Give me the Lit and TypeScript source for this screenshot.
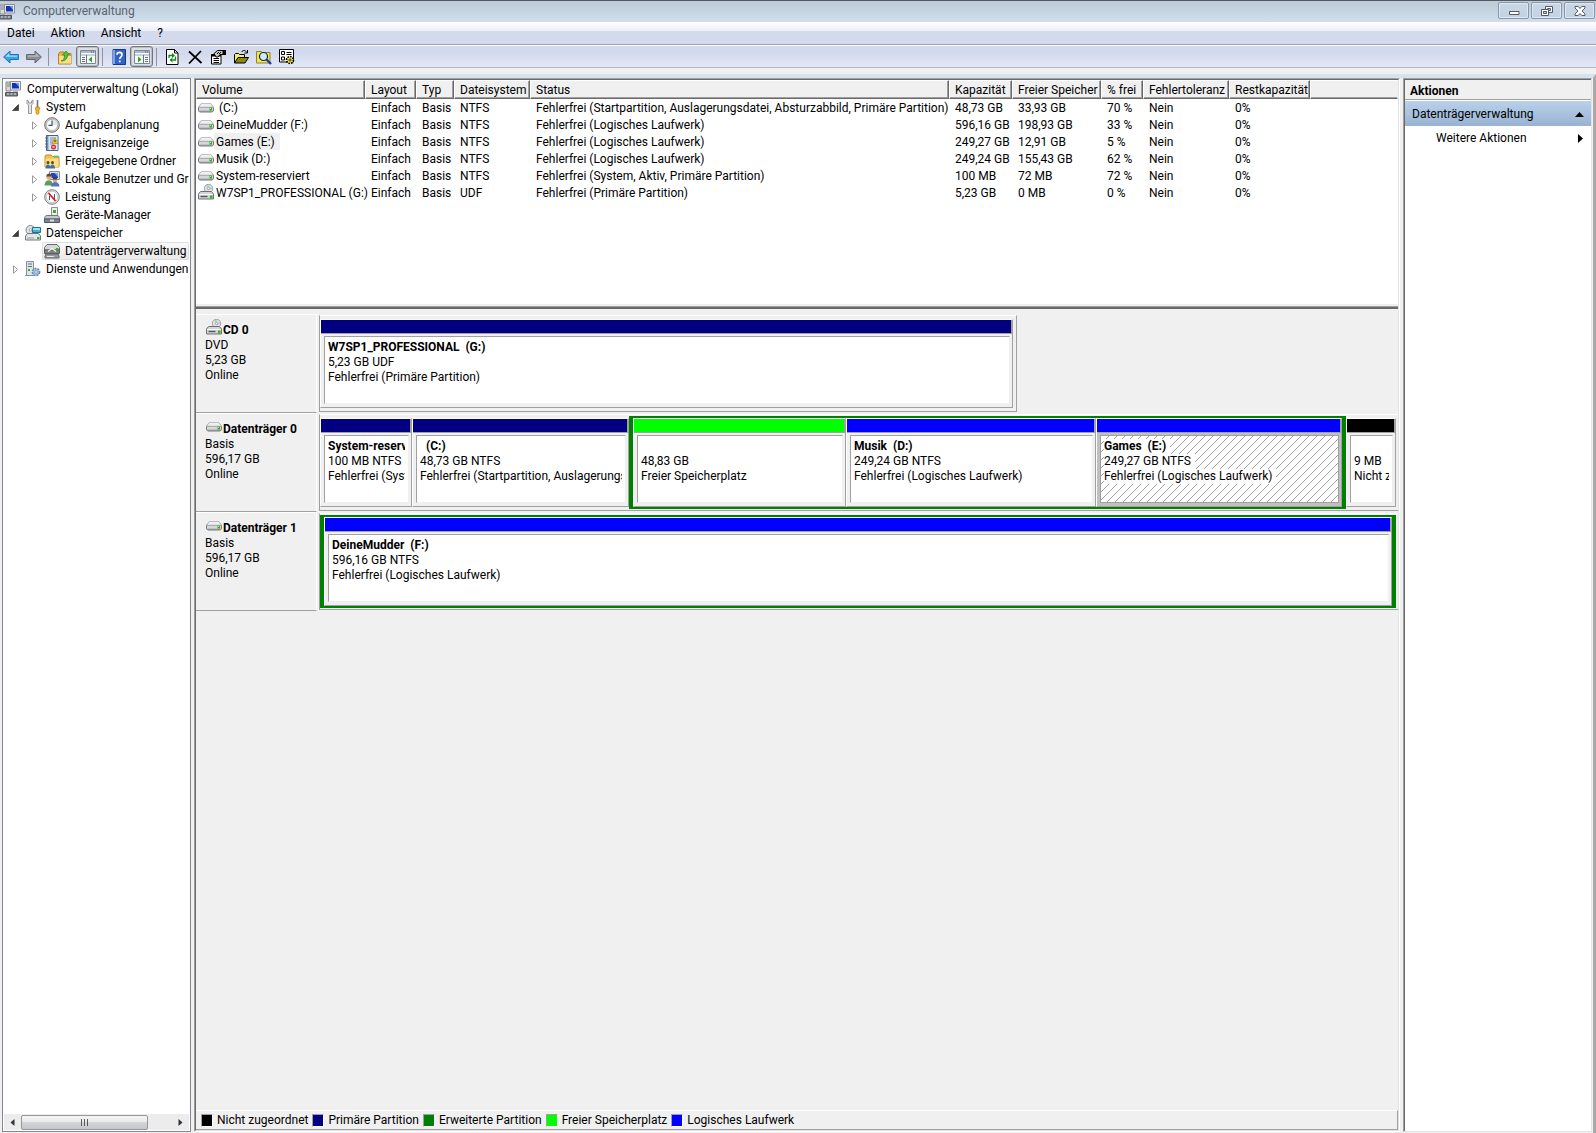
import { LitElement, html, svg, css, nothing } from "lit";
import { customElement, state } from "lit/decorators.js";
import { classMap } from "lit/directives/class-map.js";
import { styleMap } from "lit/directives/style-map.js";

const drive = svg`
  <path d="M3 5.500h10l2.500 3v3.200l-1.200 1.300H1.700L.5 11.700v-3.200z" fill="#a9abae" stroke="#77797c"/>
  <path d="M3.200 4.500h9.600l2.700 3.700H.5z" fill="#eeeff1" stroke="#9a9c9f" stroke-width=".6"/>
  <path d="M1 9h14v2.500H1z" fill="#d5d7da"/>
  <path d="M11.500 8.500h2.500v3h-2.500z" fill="#2fae1e"/><path d="M12 9h1v1h-1z" fill="#b8f29c"/>`;

const optical = svg`
  <circle cx="10.500" cy="4.500" r="4.200" fill="#dfe3e6" stroke="#8b9095" stroke-width=".8"/>
  <path d="M10.500 4.500L8 1.300A4 4 0 0 1 11 .8z" fill="#9fd6c0"/>
  <path d="M10.500 4.500l3.800-1.600a4 4 0 0 1 .2 2.400z" fill="#c8b6e2"/>
  <circle cx="10.500" cy="4.500" r="1.200" fill="#fff" stroke="#777" stroke-width=".6"/>
  <path d="M2.500 7.500h11l2 2.500v5H.5v-5z" fill="#d2d4d7" stroke="#6f7275"/>
  <path d="M1 10.500h14" stroke="#fafafa"/><path d="M2.500 12.500h7" stroke="#54575a" stroke-width="1.400"/>
  <path d="M12 11.500h2.500v3H12z" fill="#36b324"/>`;

const computer = svg`
  <path d="M1 1h5v9H1z" fill="#d8dadd" stroke="#85888c"/><path d="M2 3h3M2 5h3" stroke="#7c8084"/>
  <path d="M5.500.5h10v8.500h-10z" fill="#e8e9eb" stroke="#8b8e92"/>
  <path d="M7 2h7v5.500H7z" fill="#1233b8"/><path d="M10.500 2H14v4z" fill="#6d9bf2"/>
  <path d="M8 9.500h5v2H8z" fill="#b9bbbf"/>
  <path d="M.5 11.500h12v3.500H.5z" fill="#73797f" stroke="#53585d"/>
  <path d="M2 13h2M5.500 13h2M9 13h2" stroke="#e8eaec"/>`;

const paneWindow = (d: unknown) => svg`
  <path d="M.5 1.500h15v13H.5z" fill="#fbfcfd" stroke="#7d8897"/>
  <path d="M1 2h14v2H1z" fill="#a9b9cd"/><path d="M11 3h1M13 3h1" stroke="#45556a"/>
  <path d="M1 6h14" stroke="#98a4b3"/>${d}`;

const icons: Record<string, unknown> = {
  drive,
  optical,
  computer,
  tools: svg`
    <path d="M2 1v3.500l1.500 1.500V14.500h3V6L8 4.500V1L6.500 2v2h-3V2z" fill="#e4e6e8" stroke="#7d8185" stroke-width=".8"/>
    <path d="M12.500 1v7" stroke="#6f7376" stroke-width="1.600"/><path d="M10.800 8h3.400l.5 2-.7 1v3.500l-1.500 1-1.500-1V11l-.7-1z" fill="#f5b417" stroke="#b9800a" stroke-width=".7"/>`,
  clock: svg`
    <circle cx="8" cy="8" r="7.300" fill="#cfcac2" stroke="#77736c"/><circle cx="8" cy="8" r="5.600" fill="#fbfcfe" stroke="#a19c92" stroke-width=".6"/>
    <path d="M8 2.400A5.600 5.600 0 0 1 13.600 8H8z" fill="#d9e7f6"/><path d="M8 3.500V8.300H4.500" fill="none" stroke="#3b5578" stroke-width="1.200"/>`,
  events: svg`
    <path d="M2.500.5h11.500v15H2.500z" fill="#7fa0cf" stroke="#43618f"/><path d="M4.500 1h9v14h-9z" fill="#dde7f4"/>
    <path d="M6 3h6M6 5h4M6 7h3M6 9h2" stroke="#6f8fbe"/><path d="M1 3h3M1 6h3M1 9h3M1 12h3" stroke="#5d6b80"/>
    <path d="M11 3l3 5.500H8z" fill="#ffd52e" stroke="#b08b00" stroke-width=".7"/><path d="M11 5v2.300" stroke="#222"/>
    <circle cx="9.500" cy="12" r="2.500" fill="#d8262c"/><path d="M8.500 11l2 2m0-2l-2 2" stroke="#fff" stroke-width=".8"/>`,
  share: svg`
    <path d="M1 3.500L2 2h5l1.500 1.500H15V14H1z" fill="#f3c34f" stroke="#c08d21"/><path d="M1.500 5.500h13V14h-13z" fill="#fbdd87"/>
    <path d="M10 2.500h4.500v2.500H10z" fill="#7fbf6a"/>
    <circle cx="4" cy="9.500" r="1.500" fill="#5b4630"/><circle cx="8.500" cy="9.500" r="1.500" fill="#5b4630"/>
    <path d="M1.500 15.500c0-5.500 5-5.500 5 0zM6 15.500c0-5.500 5-5.500 5 0z" fill="#3f719f"/>`,
  users: svg`
    <path d="M5.500.5h10v8h-10z" fill="#dcdfe4" stroke="#878b91"/><path d="M7 2h7v5H7z" fill="#1e46c4"/><path d="M10.500 2H14v4z" fill="#7aa3f3"/>
    <circle cx="5" cy="6" r="2.700" fill="#e0b187"/><path d="M2.300 5.500c0-4 5.500-4 5.500 0z" fill="#6b4a2b"/>
    <path d="M.5 14.500c0-7 8.500-7 8.500 0z" fill="#5f9a63"/><circle cx="11" cy="9" r="2.300" fill="#d9a679"/><path d="M8.700 8.500c0-3 4.600-3 4.600 0z" fill="#433"/>
    <path d="M7 15.500c0-6 8.500-6 8.500 0z" fill="#4e79b4"/>`,
  perf: svg`
    <circle cx="8" cy="8" r="7.300" fill="#e6e7e8" stroke="#7b7d80"/><circle cx="8" cy="8" r="5.700" fill="#fff" stroke="#a5a7a9" stroke-width=".6"/>
    <path d="M5.500 11V6.500M10.500 5v5.500" stroke="#555" stroke-width="1"/><path d="M4.500 4l7 8" stroke="#dc1f26" stroke-width="1.800"/>`,
  device: svg`
    <path d="M7.500.5h6V9h-6z" fill="#eceef0" stroke="#8c9094"/><path d="M9 3h3v3H9z" fill="#36b324"/>
    <path d="M2 8.500h12l1.500 2v1.500H.5v-1.500z" fill="#c5c9cd" stroke="#75797d"/><path d="M.5 12h15v3.500H.5z" fill="#7c868f" stroke="#525a62"/>
    <path d="M6 12.500h4v2H6z" fill="#d8dde2"/>`,
  storage: svg`
    <circle cx="5.500" cy="5" r="4.500" fill="#dfe3e6" stroke="#84898e"/><circle cx="5.500" cy="5" r="1.300" fill="#fff" stroke="#777" stroke-width=".6"/>
    <path d="M7.500 2.500h8v5h-8z" fill="#3db2dd" stroke="#26718f"/><path d="M8 3h7v2H8z" fill="#9de1f5"/>
    <path d="M2.500 8.500h11l2 2.500v4H.5v-4z" fill="#e4e6e8" stroke="#707477"/><path d="M12 12h2.500v2H12z" fill="#36b324"/><path d="M2 13h7" stroke="#999"/>`,
  disks: svg`
    <path d="M3 1.500h10l2.500 3V7H.5V4.500z" fill="#d5d7d9" stroke="#666a6d"/><path d="M.5 7h15v3.500H.5z" fill="#7d8184" stroke="#5a5e61"/>
    <path d="M4 8.500l4-3 4 3" fill="none" stroke="#f3f4f4" stroke-width="1.300"/><path d="M12 5h2.500v2.500H12z" fill="#36b324"/>
    <path d="M2 11h12l1 2v2H1v-2z" fill="#94989b" stroke="#606467"/><path d="M3 13.500h7" stroke="#e6e7e8"/>`,
  services: svg`
    <path d="M1.500.5h7v14h-7z" fill="#dfe3e8" stroke="#8490a0"/><path d="M3 3h4M3 5.500h4" stroke="#5f6f84"/><path d="M3 8h2v2H3z" fill="#36b324"/>
    <path d="M0 14.500h7" stroke="#8490a0"/>
    <circle cx="11" cy="11" r="3.600" fill="#a9c3de" stroke="#6a8bb0" stroke-width="1.600" stroke-dasharray="2 1"/><circle cx="11" cy="11" r="1.300" fill="#fff" stroke="#6a8bb0" stroke-width=".7"/>`,
  back: svg`<path d="M.6 8L7 2v3.500h8.400v5H7V14z" fill="#3aa5e4" stroke="#1d6fae"/><path d="M2.500 7.700L6.300 4v2.500h8v1.200z" fill="#a3dcf8"/>`,
  forward: svg`<path d="M15.400 8L9 2v3.500H.6v5H9V14z" fill="#8b8f93" stroke="#62666a"/><path d="M13.500 7.700L9.700 4v2.500h-8v1.200z" fill="#b9bcbf"/>`,
  up: svg`
    <path d="M1.500 4.500L3 3h4l1 1.500h6v10.500h-12.500z" fill="#eab64a" stroke="#b3821f"/><path d="M2 7h12v7.500H2z" fill="#fbdc8b"/>
    <path d="M4 12c3-.5 3.500-3 3.500-6H5.500l3.500-4 3.500 4h-2C10.500 9 9 12 4 12z" fill="#58c232" stroke="#2c8414" stroke-width=".7"/>`,
  treePane: paneWindow(svg`<path d="M6.500 6v8M2 8.500h3M2 10.500h3M2 12.500h3" stroke="#5e7391"/><path d="M12 7.500v6L8.500 10.500z" fill="#2fa51c"/>`),
  actionPane: paneWindow(svg`<path d="M9.500 6v8M11 8.500H14M11 10.500H14M11 12.500H14" stroke="#5e7391"/><path d="M4 7.500v6l3.500-3z" fill="#2fa51c"/>`),
  help: svg`<path d="M2 .5h12.500v15H2z" fill="#2f63c4" stroke="#18397f"/><path d="M2 1h2v14H2z" fill="#7fa4ea"/><path d="M6 5.800c0-3.300 5-3.300 5 0 0 2-2.300 2-2.300 4.200" fill="none" stroke="#fff" stroke-width="1.700"/><path d="M7.800 11.500h1.800v1.800H7.800z" fill="#fff"/>`,
  refresh: svg`<path d="M2.500.5h8l3.500 3.500v11.500H2.500z" fill="#fff" stroke="#000"/><path d="M10.500.5V4H14" fill="none" stroke="#000"/>
    <path d="M5 9V6.500h3M11.500 7.500v3.500H8.500" fill="none" stroke="#0a8a14" stroke-width="1.300"/><path d="M8 4v5l3-2.500zM8.500 8.500v5l-3-2.500z" fill="#0a8a14"/>`,
  remove: svg`<path d="M2 2.500L14.500 14M14 2L2 14.500" fill="none" stroke="#000" stroke-width="1.800"/>`,
  props: svg`<path d="M1.500 5.500h9.500v9.500H1.500z" fill="#fff" stroke="#000"/><path d="M1.500 6.500H11" stroke="#000" stroke-width="2"/><path d="M3.500 9.500h5.500M3.500 11.500h5.500M3.500 13.500h5.500" stroke="#000"/>
    <path d="M4 4.500L7.500 1.500H13v4h-3L8 8H6z" fill="#c9c9bb" stroke="#000"/><path d="M13 1h3v5h-3z" fill="#000"/><path d="M7 5l2-2M9 5l2-2" stroke="#000"/>`,
  open: svg`<path d="M1.500 14V5.500l1-1h3l1 1h5V8" fill="#f6ee6a" stroke="#000"/><path d="M1.500 14L5 8.500h10.500L12 14z" fill="#8d861a" stroke="#000"/><path d="M8.500 3c2-2.500 4-1.500 5.500.5M14.500 1v3h-3" fill="none" stroke="#000"/>`,
  find: svg`<path d="M.5 2.500h5l1 1h7.500v10.500H.5z" fill="#f2e35c" stroke="#8f8420"/><circle cx="7.500" cy="7.500" r="4" fill="#c9eefb" stroke="#222" stroke-width="1.200"/><path d="M10.500 10.500l4.500 4.500" stroke="#1336b5" stroke-width="2.300"/>`,
  settings: svg`<path d="M.5.500h14v12.500H.5z" fill="#fff" stroke="#000"/><path d="M2.500 2.500h3v3h-3zM2.500 8h3v3h-3z" fill="none" stroke="#000"/><path d="M7.500 3.500h5M7.500 5.500h5M7 9.500h1" stroke="#000"/>
    <circle cx="11" cy="11" r="3.400" fill="#f4e64a" stroke="#000" stroke-width="1.800" stroke-dasharray="1.600 1"/><circle cx="11" cy="11" r="2.400" fill="#f4e64a"/><circle cx="11" cy="11" r="1.100" fill="#fff" stroke="#000" stroke-width=".8"/>`,
};

const icon = (name: string) =>
  html`<svg class="icon" width="16" height="16" viewBox="0 0 16 16" aria-hidden="true">${icons[name]}</svg>`;

interface TreeItem { label: string; icon: string; depth: number; arrow?: "open" | "closed" }
const tree: TreeItem[] = [
  { label: "Computerverwaltung (Lokal)", icon: "computer", depth: 0 },
  { label: "System", icon: "tools", depth: 1, arrow: "open" },
  { label: "Aufgabenplanung", icon: "clock", depth: 2, arrow: "closed" },
  { label: "Ereignisanzeige", icon: "events", depth: 2, arrow: "closed" },
  { label: "Freigegebene Ordner", icon: "share", depth: 2, arrow: "closed" },
  { label: "Lokale Benutzer und Gruppen", icon: "users", depth: 2, arrow: "closed" },
  { label: "Leistung", icon: "perf", depth: 2, arrow: "closed" },
  { label: "Geräte-Manager", icon: "device", depth: 2 },
  { label: "Datenspeicher", icon: "storage", depth: 1, arrow: "open" },
  { label: "Datenträgerverwaltung", icon: "disks", depth: 2 },
  { label: "Dienste und Anwendungen", icon: "services", depth: 1, arrow: "closed" },
];

const columns: [string, number][] = [
  ["Volume", 169], ["Layout", 51], ["Typ", 38], ["Dateisystem", 76], ["Status", 419],
  ["Kapazität", 63], ["Freier Speicher", 89], ["% frei", 42], ["Fehlertoleranz", 86], ["Restkapazität", 81],
];

const volumes: string[][] = [
  ["\u00a0(C:)", "Einfach", "Basis", "NTFS", "Fehlerfrei (Startpartition, Auslagerungsdatei, Absturzabbild, Primäre Partition)", "48,73 GB", "33,93 GB", "70 %", "Nein", "0%"],
  ["DeineMudder (F:)", "Einfach", "Basis", "NTFS", "Fehlerfrei (Logisches Laufwerk)", "596,16 GB", "198,93 GB", "33 %", "Nein", "0%"],
  ["Games (E:)", "Einfach", "Basis", "NTFS", "Fehlerfrei (Logisches Laufwerk)", "249,27 GB", "12,91 GB", "5 %", "Nein", "0%"],
  ["Musik (D:)", "Einfach", "Basis", "NTFS", "Fehlerfrei (Logisches Laufwerk)", "249,24 GB", "155,43 GB", "62 %", "Nein", "0%"],
  ["System-reserviert", "Einfach", "Basis", "NTFS", "Fehlerfrei (System, Aktiv, Primäre Partition)", "100 MB", "72 MB", "72 %", "Nein", "0%"],
  ["W7SP1_PROFESSIONAL (G:)", "Einfach", "Basis", "UDF", "Fehlerfrei (Primäre Partition)", "5,23 GB", "0 MB", "0 %", "Nein", "0%"],
];

type Kind = "primary" | "logical" | "free" | "unallocated";
interface Partition { kind: Kind; share: number; name: string; size: string; status: string }
interface Extended { share: number; parts: Partition[] }
interface Disk { name: string; icon: string; lines: string[]; share: number; rest: number; parts: (Partition | Extended)[] }

const disks: Disk[] = [
  {
    name: "CD 0", icon: "optical", lines: ["DVD", "5,23 GB", "Online"], share: 698, rest: 381,
    parts: [{ kind: "primary", share: 1, name: "W7SP1_PROFESSIONAL  (G:)", size: "5,23 GB UDF", status: "Fehlerfrei (Primäre Partition)" }],
  },
  {
    name: "Datenträger 0", icon: "drive", lines: ["Basis", "596,17 GB", "Online"], share: 1, rest: 0,
    parts: [
      { kind: "primary", share: 92, name: "System-reserviert", size: "100 MB NTFS", status: "Fehlerfrei (System, Aktiv, Primäre Partition)" },
      { kind: "primary", share: 217, name: "  (C:)", size: "48,73 GB NTFS", status: "Fehlerfrei (Startpartition, Auslagerungsdatei, Absturzabbild)" },
      {
        share: 717,
        parts: [
          { kind: "free", share: 213, name: "", size: "48,83 GB", status: "Freier Speicherplatz" },
          { kind: "logical", share: 250, name: "Musik  (D:)", size: "249,24 GB NTFS", status: "Fehlerfrei (Logisches Laufwerk)" },
          { kind: "logical", share: 246, name: "Games  (E:)", size: "249,27 GB NTFS", status: "Fehlerfrei (Logisches Laufwerk)" },
        ],
      },
      { kind: "unallocated", share: 50, name: "", size: "9 MB", status: "Nicht zugeordnet" },
    ],
  },
  {
    name: "Datenträger 1", icon: "drive", lines: ["Basis", "596,17 GB", "Online"], share: 1, rest: 0,
    parts: [{ share: 1, parts: [{ kind: "logical", share: 1, name: "DeineMudder  (F:)", size: "596,16 GB NTFS", status: "Fehlerfrei (Logisches Laufwerk)" }] }],
  },
];

const legend: [string, string][] = [
  ["unallocated", "Nicht zugeordnet"], ["primary", "Primäre Partition"], ["extended", "Erweiterte Partition"],
  ["free", "Freier Speicherplatz"], ["logical", "Logisches Laufwerk"],
];

const tracks = (items: { share: number }[]) => ({
  gridTemplateColumns: items.map((p) => `minmax(0, ${p.share}fr)`).join(" "),
});

@customElement("app-root")
export class AppRoot extends LitElement {
  @state() private node = "Datenträgerverwaltung";
  @state() private volume = "E:";

  static styles = css`
    :host {
      display: flex;
      flex-direction: column;
      min-height: 100vh;
      box-sizing: border-box;
      background: #f0f0f0;
      color: #000;
      font: 12px/15px Roboto, "Open Sans", sans-serif;
    }
    * { box-sizing: border-box; }
    button { font: inherit; color: inherit; background: none; border: 0; padding: 0; margin: 0; text-align: left; white-space: nowrap; }
    ul { list-style: none; margin: 0; padding: 0; }
    svg { display: block; flex: none; }

    .titlebar { display: flex; align-items: center; height: 22px; border-top: 1px solid #55585c; background: linear-gradient(#bccad9, #d2dfeb); gap: 8px; }
    .titlebar .icon { margin-left: -1px; }
    .titlebar h1 { margin: 0; flex: 1; font-size: 12px; font-weight: 400; color: #5b6470; }
    .controls { display: flex; gap: 2px; padding-right: 1px; align-self: flex-start; padding-top: 1px; }
    .controls button { display: grid; place-items: center; width: 31px; height: 17px; border: 1px solid #8797ad; border-radius: 2px; box-shadow: inset 0 0 0 1px #dde8f3; background: linear-gradient(#cad7e6, #c3d1e1); }

    .menubar { display: flex; align-items: center; gap: 16px; height: 22px; padding: 0 7px; background: linear-gradient(#fff, #eaeef8 9px, #d4daed 9px, #d4daed); }
    .toolbar { display: flex; align-items: center; height: 24px; padding: 1px 2px 0; border-top: 1px solid #a0a0a0; border-bottom: 1px solid #b4b8c0; background: linear-gradient(#fff 1px, #d4daed 1px, #d4daed 9px, #e2e8f7); }
    .tool { display: grid; place-items: center; width: 23px; height: 21px; }
    .tool.framed { border: 1px solid #70757d; border-radius: 3px; background: #dcdfe6; box-shadow: inset 0 0 0 1px #b9bdc5; }
    .sep { width: 1px; height: 18px; margin: 0 4px 0 3px; background: #8f949c; }
    .sep.last { margin-right: 3px; }
    .tool.first { margin-left: -3px; }
    .gap { height: 6px; background: #f0f0f0; }

    .main { flex: 1; display: grid; grid-template-columns: 189px minmax(0, 1fr) 189px; gap: 3px; padding: 0 1px 1px 2px; border-top: 4px solid #d5e2f0; border-right: 3px solid #a9a9a9; }

    .tree { display: flex; flex-direction: column; min-width: 0; background: #fff; border: 1px solid #828790; padding: 1px; overflow: hidden; }
    .tree ul { flex: 1; padding-left: 1px; overflow: hidden; }
    .node { display: flex; align-items: center; height: 18px; }
    .node.d1 { padding-left: 2px; }
    .node.d2 { padding-left: 21px; }
    .twist { display: grid; place-items: center; width: 16px; height: 18px; flex: none; }
    .entry { display: flex; align-items: center; gap: 5px; height: 18px; padding-left: 2px; }
    .d0 .entry { padding-left: 0; gap: 6px; }
    .entry.on { flex: 1; background: linear-gradient(#fafafa, #e8e8e8); border-radius: 2px; box-shadow: inset 0 0 0 1px #dedede; }

    .hscroll { display: flex; align-items: center; height: 16px; background: #ececed; }
    .hscroll button { display: grid; place-items: center; width: 17px; height: 16px; }
    .hscroll .rail { flex: 1; display: flex; }
    .hscroll .rail .thumb { width: 84%; height: 15px; border: 1px solid #979797; border-radius: 2px; background: linear-gradient(#f5f5f5, #e9e9eb 50%, #d4d5d9 50%, #c4c5c9); }

    .center { display: flex; flex-direction: column; min-width: 0; border: 1px solid #a0a0a0; border-right-color: #fff; border-bottom-color: #fff; }
    .inner { flex: 1; display: flex; flex-direction: column; min-width: 0; border: 1px solid #696969; border-right-color: #e3e3e3; border-bottom-color: #e3e3e3; }
    .list { height: 222px; background: #fff; overflow: hidden; flex: none; }
    table { width: 100%; border-collapse: separate; border-spacing: 0; table-layout: fixed; }
    th { height: 19px; padding: 2px 0 0 5px; font-weight: 400; text-align: left; white-space: nowrap; background: #f0f0f0; border: 1px solid #fff; border-right: 1px solid #696969; border-bottom: 1px solid #696969; box-shadow: inset -1px -1px #a0a0a0; }
    th:last-child { border-right-color: #f0f0f0; box-shadow: inset 0 -1px #a0a0a0; }
    td { height: 17px; padding: 2px 0 0 6px; white-space: nowrap; overflow: visible; }
    td:first-child { padding: 0 0 0 2px; }
    .vol { display: flex; align-items: flex-start; height: 17px; }
    .vol span { height: 17px; padding: 2px 5px 0 2px; }
    .vol span.on { background: #f0f0f0; }

    .splitter { height: 7px; flex: none; border-top: 2px solid #fff; border-bottom: 2px solid #696969; box-shadow: inset 0 -1px #a0a0a0; background: #f0f0f0; }

    .disks { flex: 1; padding-top: 5px; }
    .disk { display: flex; height: 99px; }
    .label { width: 121px; flex: none; margin-right: 2px; padding: 4px 0 0 9px; border-top: 1px solid #fff; border-right: 1px solid #fff; border-bottom: 1px solid #a0a0a0; }
    .label h2 { display: flex; align-items: flex-start; gap: 1px; height: 19px; margin: 0 0 0 1px; font-size: 12px; line-height: 15px; font-weight: 700; }
    .label h2 span { padding-top: 4px; }
    .label p { margin: 0; }
    .graph { flex: 1; display: grid; min-width: 0; }
    .strip { display: grid; height: 97px; margin-top: 1px; padding: 1px 2px 1px 0; border-top: 1px solid #fff; border-left: 1px solid #a0a0a0; border-bottom: 1px solid #a0a0a0; }
    .strip.short { padding-right: 3px; border-right: 1px solid #a0a0a0; }
    .ext { display: grid; min-width: 0; border: solid #008000; border-width: 2px 4px; }
    .part { display: flex; flex-direction: column; min-width: 0; height: 89px; border: 1px solid #a0a0a0; border-top-color: #fff; border-left-color: #fff; }
    .strip > .part { margin: 2px 0; }
    .cap { height: 14px; border-right: 1px solid #a0a0a0; border-bottom: 1px solid #a0a0a0; }
    .primary { background: #000080; }
    .logical { background: #0000ff; }
    .free { background: #00ff00; }
    .unallocated { background: #000; }
    .extended { background: #008000; }
    .body { flex: 1; display: grid; grid-template-columns: minmax(0, 1fr); padding: 2px 2px 3px 3px; width: 100%; }
    .box { display: block; width: 100%; padding: 3px; background: #fff; border: 1px solid #a0a0a0; border-right-color: #f0f0f0; border-bottom-color: #f0f0f0; }
    .text { display: block; overflow: hidden; }
    .line { display: block; height: 15px; white-space: pre; }
    .name { font-weight: 700; }
    .part.on .body { background: #c0c0c0; }
    .part.on .box { border-color: #a0a0a0; background: linear-gradient(to bottom right, transparent 45%, #a0a0a0 45%, #a0a0a0 55%, transparent 55%) 0 0 / 8px 8px #fff; }
    .part.on .line { width: max-content; background: #fff; padding-right: 4px; }

    .legend { display: flex; align-items: center; gap: 4px; height: 20px; flex: none; padding-left: 5px; border-top: 1px solid #fff; border-right: 1px solid #a0a0a0; border-bottom: 1px solid #a0a0a0; }
    .legend li { display: flex; align-items: center; gap: 4px; height: 18px; }
    .legend li span:last-child { padding-top: 1px; }
    .swatch { width: 12px; height: 13px; border: 1px solid #a0a0a0; border-right-color: #fff; border-bottom-color: #fff; }

    .actions { display: flex; flex-direction: column; border: 1px solid #a0a0a0; border-right-color: #e3e3e3; border-bottom-color: #e3e3e3; background: #fff; box-shadow: inset 1px 1px #696969; padding: 1px 0 0 1px; }
    .actions h2 { margin: 0; height: 20px; padding: 4px 5px 0; font-size: 12px; line-height: 15px; background: #f0f0f0; border-bottom: 1px solid #a0a0a0; }
    .group { display: flex; align-items: center; justify-content: space-between; height: 25px; margin-top: 1px; padding: 1px 7px 0; background: linear-gradient(#b9d1ea, #98b3d2); }
    .action { display: flex; align-items: center; justify-content: space-between; height: 24px; padding: 0 8px 0 31px; }
  `;

  private tool(name: string, label: string, cls = "") {
    return html`<button class="tool ${cls}" aria-label=${label}>${icon(name)}</button>`;
  }

  private partition(p: Partition) {
    const letter = /\((\w:)\)/.exec(p.name)?.[1] ?? "";
    const on = letter !== "" && letter === this.volume;
    return html`<div class=${classMap({ part: true, on })}>
      <div class="cap ${p.kind}"></div>
      <button class="body" @click=${() => (this.volume = letter)}>
        <span class="box"><span class="text">
          <span class="line name">${p.name}</span>
          <span class="line">${p.size}</span>
          <span class="line">${p.status}</span>
        </span></span>
      </button>
    </div>`;
  }

  private disk(d: Disk) {
    return html`<section class="disk">
      <div class="label">
        <h2>${icon(d.icon)}<span>${d.name}</span></h2>
        ${d.lines.map((l) => html`<p>${l}</p>`)}
      </div>
      <div class="graph" style=${styleMap(d.rest ? tracks([d, { share: d.rest }]) : {})}>
        <div class=${classMap({ strip: true, short: d.rest > 0 })} style=${styleMap(tracks(d.parts))}>
          ${d.parts.map((p) =>
            "parts" in p
              ? html`<div class="ext" style=${styleMap(tracks(p.parts))}>${p.parts.map((q) => this.partition(q))}</div>`
              : this.partition(p))}
        </div>
      </div>
    </section>`;
  }

  private treeNode(t: TreeItem) {
    return html`<li class="node d${t.depth}">
      ${t.depth
        ? html`<span class="twist">${t.arrow
            ? html`<svg width="9" height="9" viewBox="0 0 9 9">${t.arrow === "open"
                ? svg`<path d="M7.500 1.500v6h-6z" fill="#3f3f3f" stroke="#262626" stroke-width=".6"/>`
                : svg`<path d="M2.500.8v7.400L6.700 4.500z" fill="#fff" stroke="#9a9a9a"/>`}</svg>`
            : nothing}</span>`
        : nothing}
      <button class=${classMap({ entry: true, on: t.label === this.node })} @click=${() => (this.node = t.label)}>
        ${icon(t.icon)}<span>${t.label}</span>
      </button>
    </li>`;
  }

  render() {
    return html`
      <header class="titlebar">
        ${icon("computer")}
        <h1>Computerverwaltung</h1>
        <div class="controls">
          <button aria-label="Minimieren"><svg width="14" height="12" viewBox="0 0 14 12"><path d="M2.500 6.500h9.500v3H2.500z" fill="#fff" stroke="#535a66"/></svg></button>
          <button aria-label="Verkleinern"><svg width="14" height="12" viewBox="0 0 14 12"><path d="M5.500 1.500h7v6h-7z" fill="#fff" stroke="#535a66"/><path d="M7.500 3.500h3v2h-3z" fill="#c6d3e3" stroke="#535a66"/><path d="M1.500 4.500h7v6h-7z" fill="#fff" stroke="#535a66"/><path d="M3.500 6.500h3v2h-3z" fill="#c6d3e3" stroke="#535a66"/></svg></button>
          <button aria-label="Schließen"><svg width="14" height="12" viewBox="0 0 14 12"><path d="M2 1.500h3.200L7 3.500l1.800-2H12v1.500L9 6l3 3v1.500H8.800L7 8.500l-1.800 2H2V9l3-3-3-3z" fill="#fff" stroke="#535a66"/></svg></button>
        </div>
      </header>
      <nav class="menubar">
        <button>Datei</button><button>Aktion</button><button>Ansicht</button><button>?</button>
      </nav>
      <div class="toolbar" role="toolbar">
        ${this.tool("back", "Zurück", "first")}${this.tool("forward", "Vorwärts")}
        <span class="sep"></span>
        ${this.tool("up", "Eine Ebene nach oben")}${this.tool("treePane", "Konsolenstruktur", "framed")}
        <span class="sep"></span>
        ${this.tool("help", "Hilfe")}${this.tool("actionPane", "Aktionsbereich", "framed")}
        <span class="sep last"></span>
        ${this.tool("refresh", "Aktualisieren")}${this.tool("remove", "Löschen")}${this.tool("props", "Eigenschaften")}
        ${this.tool("open", "Öffnen")}${this.tool("find", "Durchsuchen")}${this.tool("settings", "Einstellungen")}
      </div>
      <div class="gap"></div>
      <main class="main">
        <nav class="tree">
          <ul>${tree.map((t) => this.treeNode(t))}</ul>
          <div class="hscroll">
            <button aria-label="Nach links"><svg width="5" height="7" viewBox="0 0 5 7"><path d="M4.500 0v7L.5 3.500z" fill="#333"/></svg></button>
            <div class="rail"><button class="thumb" aria-label="Bildlauf"><svg width="9" height="7" viewBox="0 0 9 7"><path d="M1.500 0v7M4.500 0v7M7.500 0v7" stroke="#5b5b5b"/></svg></button></div>
            <button aria-label="Nach rechts"><svg width="5" height="7" viewBox="0 0 5 7"><path d="M.5 0v7l4-3.500z" fill="#333"/></svg></button>
          </div>
        </nav>
        <div class="center"><div class="inner">
          <div class="list">
            <table>
              <colgroup>${columns.map(([, w]) => html`<col style=${styleMap({ width: `${w}px` })}>`)}<col></colgroup>
              <thead><tr>${columns.map(([c]) => html`<th scope="col">${c}</th>`)}<th></th></tr></thead>
              <tbody>
                ${volumes.map((v) => html`<tr>${v.map((c, i) =>
                  i
                    ? html`<td>${c}</td>`
                    : html`<td><div class="vol">${icon(c.includes("G:") ? "optical" : "drive")}<span class=${classMap({ on: c.includes(this.volume) && this.volume !== "" })}>${c}</span></div></td>`)}<td></td></tr>`)}
              </tbody>
            </table>
          </div>
          <div class="splitter"></div>
          <div class="disks">${disks.map((d) => this.disk(d))}</div>
          <ul class="legend">${legend.map(([k, l]) => html`<li><span class="swatch ${k}"></span><span>${l}</span></li>`)}</ul>
        </div></div>
        <aside class="actions">
          <h2>Aktionen</h2>
          <button class="group">Datenträgerverwaltung<svg width="9" height="5" viewBox="0 0 9 5"><path d="M4.500 0L9 5H0z"/></svg></button>
          <button class="action">Weitere Aktionen<svg width="5" height="9" viewBox="0 0 5 9"><path d="M0 0l5 4.500L0 9z"/></svg></button>
        </aside>
      </main>
    `;
  }
}
